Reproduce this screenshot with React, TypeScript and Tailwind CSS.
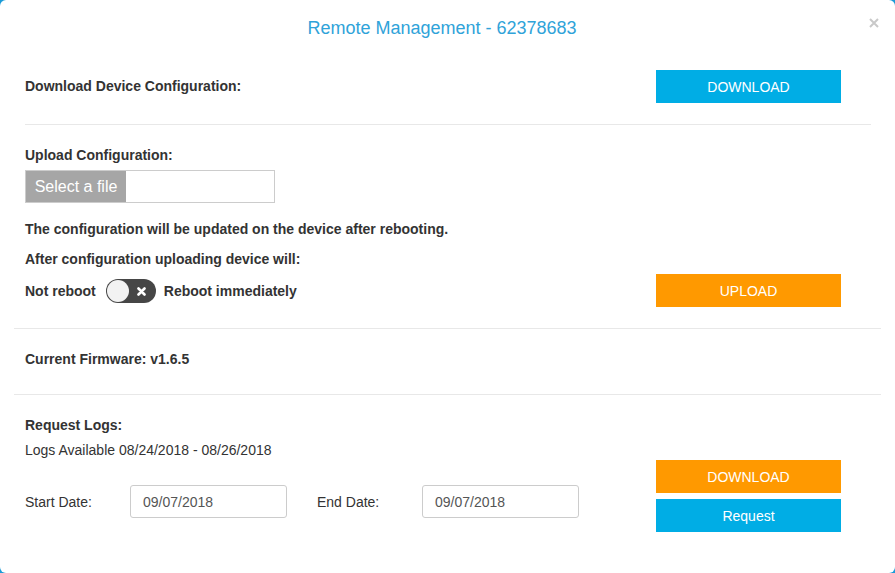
import React from 'react';

function CloseIcon() {
  return (
    <svg width="10" height="10" viewBox="0 0 10 10">
      <path d="M1 1L9 9M9 1L1 9" stroke="#c9c9c9" strokeWidth="2" />
    </svg>
  );
}

function Toggle() {
  // switch shown in the "off" state: knob left, cross on the right
  return (
    <div className="relative h-[24px] w-[50px] rounded-full bg-[#464646]">
      <div className="absolute left-[1px] top-[1px] h-[22px] w-[22px] rounded-full bg-[#f2f2f2]" />
      <svg className="absolute left-[31px] top-[8px]" width="9" height="9" viewBox="0 0 9 9">
        <path d="M1.5 1.5L7.5 7.5M7.5 1.5L1.5 7.5" stroke="#fff" strokeWidth="2.6" strokeLinecap="round" />
      </svg>
    </div>
  );
}

function Btn({ color, children }: { color: 'blue' | 'orange'; children: React.ReactNode }) {
  return (
    <button
      className={
        'h-[33px] w-[185px] pt-[1px] text-[14px] font-normal text-white ' +
        (color === 'blue' ? 'bg-[#00ade5]' : 'bg-[#ff9900]')
      }
    >
      {children}
    </button>
  );
}

function DateField({ label, value }: { label: string; value: string }) {
  return (
    <div className="flex items-center">
      <span className="w-[105px] text-[14px] text-[#333]">{label}</span>
      <div className="flex h-[33px] w-[157px] items-center rounded-[3px] border border-[#cccccc] px-[12px] text-[14px] text-[#555]">
        {value}
      </div>
    </div>
  );
}

export default function App() {
  return (
    <div className="h-[573px] w-[895px] bg-[#1b9bd7]" style={{ fontFamily: '"Liberation Sans", Arial, sans-serif' }}>
      <div className="relative flex h-full w-full flex-col rounded-[6px] bg-white">
        <div className="absolute right-[16px] top-[18px]">
          <CloseIcon />
        </div>

        {/* header */}
        <div className="pr-[11px] pt-[16px] text-center text-[18px] leading-[24px] text-[#2fa3d9]">
          Remote Management - 62378683
        </div>

        {/* download config */}
        <div className="mt-[30px] flex items-center justify-between pl-[25px] pr-[54px]">
          <span className="text-[14px] font-bold text-[#333]">Download Device Configuration:</span>
          <Btn color="blue">DOWNLOAD</Btn>
        </div>
        <div className="ml-[25px] mr-[24px] mt-[21px] h-px bg-[#e8e8e8]" />

        {/* upload config */}
        <div className="flex flex-col pl-[25px] pr-[54px] text-[14px] font-bold leading-[20px] text-[#333]">
          <div className="mt-[20px]">Upload Configuration:</div>
          <div className="mt-[5px] flex h-[33px] w-[250px] border border-[#cccccc]">
            <div className="flex w-[100px] items-center justify-center bg-[#a6a6a6] text-[16px] font-normal text-white">
              Select a file
            </div>
          </div>
          <div className="mt-[16px]">The configuration will be updated on the device after rebooting.</div>
          <div className="mt-[10px]">After configuration uploading device will:</div>
          <div className="mt-[5px] flex items-center justify-between">
            <div className="flex items-center">
              <span>Not reboot</span>
              <div className="ml-[10px] mr-[8px]">
                <Toggle />
              </div>
              <span>Reboot immediately</span>
            </div>
            <Btn color="orange">UPLOAD</Btn>
          </div>
        </div>
        <div className="mx-[14px] mt-[21px] h-px bg-[#e8e8e8]" />

        {/* firmware */}
        <div className="mt-[20px] pl-[25px] text-[14px] font-bold leading-[20px] text-[#333]">
          Current Firmware: v1.6.5
        </div>
        <div className="mx-[14px] mt-[25px] h-px bg-[#e8e8e8]" />

        {/* logs */}
        <div className="mt-[20px] flex justify-between pl-[25px] pr-[54px] text-[14px] leading-[20px] text-[#333]">
          <div className="flex flex-col">
            <div className="font-bold">Request Logs:</div>
            <div className="mt-[5px]">Logs Available 08/24/2018 - 08/26/2018</div>
            <div className="mt-[25px] flex items-center gap-[30px]">
              <DateField label="Start Date:" value="09/07/2018" />
              <DateField label="End Date:" value="09/07/2018" />
            </div>
          </div>
          <div className="flex flex-col gap-[6px] pt-[45px]">
            <Btn color="orange">DOWNLOAD</Btn>
            <Btn color="blue">Request</Btn>
          </div>
        </div>
      </div>
    </div>
  );
}
